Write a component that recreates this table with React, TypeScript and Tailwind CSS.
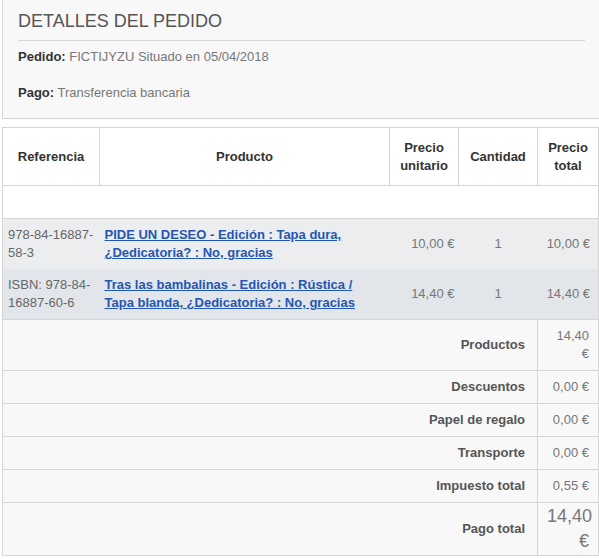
export default function App() {
  const rows = [
    {
      ref: "978-84-16887-58-3",
      name: "PIDE UN DESEO - Edición : Tapa dura, ¿Dedicatoria? : No, gracias",
      unit: "10,00 €",
      qty: "1",
      total: "10,00 €",
      bg: "bg-[#ebedef]",
    },
    {
      ref: "ISBN: 978-84-16887-60-6",
      name: "Tras las bambalinas - Edición : Rústica / Tapa blanda, ¿Dedicatoria? : No, gracias",
      unit: "14,40 €",
      qty: "1",
      total: "14,40 €",
      bg: "bg-[#e2e6ea]",
    },
  ];

  const totals = [
    { label: "Productos", value: "14,40 €", h: "h-[51px]" },
    { label: "Descuentos", value: "0,00 €", h: "h-[33px]" },
    { label: "Papel de regalo", value: "0,00 €", h: "h-[33px]" },
    { label: "Transporte", value: "0,00 €", h: "h-[33px]" },
    { label: "Impuesto total", value: "0,55 €", h: "h-[33px]" },
  ];

  return (
    <div className="w-[599px] h-[559px] overflow-hidden bg-white font-['Liberation_Sans',Arial,sans-serif] text-[13px] leading-[18px] text-[#333]">
      {/* order details box */}
      <div className="ml-[2px] h-[119px] border-l border-b border-[#d6d4d4] bg-[#f8f8f8] pl-[15px] pr-[14px]">
        <h1 className="pt-[11px] pb-[8px] border-b border-[#d6d4d4] text-[18px] leading-[21px] font-normal text-[#555] uppercase">
          Detalles del pedido
        </h1>
        <p className="pt-[7px]">
          <span className="font-bold text-[#333]">Pedido:</span>{" "}
          <span className="text-[#777]">FICTIJYZU Situado en 05/04/2018</span>
        </p>
        <p className="pt-[18px]">
          <span className="font-bold text-[#333]">Pago:</span>{" "}
          <span className="text-[#777]">Transferencia bancaria</span>
        </p>
      </div>

      {/* products table */}
      <table className="mt-[8px] ml-[2px] w-[596px] table-fixed border-collapse border border-[#d6d4d4]">
        <colgroup>
          <col className="w-[97px]" />
          <col className="w-[290px]" />
          <col className="w-[69px]" />
          <col className="w-[79px]" />
          <col className="w-[61px]" />
        </colgroup>
        <thead>
          <tr className="h-[58px] bg-white border-b border-[#d6d4d4]">
            <th className="border-r border-[#d6d4d4] font-bold text-center">Referencia</th>
            <th className="border-r border-[#d6d4d4] font-bold text-center">Producto</th>
            <th className="border-r border-[#d6d4d4] font-bold text-center">
              Precio
              <br />
              unitario
            </th>
            <th className="border-r border-[#d6d4d4] font-bold text-center">Cantidad</th>
            <th className="font-bold text-center">
              Precio
              <br />
              total
            </th>
          </tr>
        </thead>
        <tbody>
          <tr className="h-[33px] bg-white border-b border-[#d6d4d4]">
            <td colSpan={5}></td>
          </tr>
          {rows.map((r) => (
            <tr key={r.ref} className={`h-[50px] ${r.bg}`}>
              <td className="px-[5px] py-[7px] align-top text-[#666] break-words">{r.ref}</td>
              <td className="px-[5px] py-[7px] align-top">
                <a href="#" className="font-bold text-[#2456b4] underline">
                  {r.name}
                </a>
              </td>
              <td className="pr-[4px] text-right text-[#777]">{r.unit}</td>
              <td className="text-center text-[#777]">{r.qty}</td>
              <td className="pr-[8px] text-right text-[#777]">{r.total}</td>
            </tr>
          ))}
        </tbody>
        <tfoot>
          {totals.map((t) => (
            <tr key={t.label} className={`${t.h} bg-[#f8f8f8] border-t border-[#d6d4d4]`}>
              <td colSpan={4} className="pr-[12px] text-right font-bold text-[#555]">
                {t.label}
              </td>
              <td className="border-l border-[#d6d4d4] pr-[9px] pl-[9px] text-right text-[#777]">
                {t.value}
              </td>
            </tr>
          ))}
          <tr className="h-[53px] bg-[#f8f8f8] border-t border-[#d6d4d4]">
            <td colSpan={4} className="pr-[12px] text-right font-bold text-[#555]">
              Pago total
            </td>
            <td className="border-l border-[#d6d4d4] pr-[9px] pl-[9px] text-right text-[18px] leading-[25px] text-[#777]">
              14,40 €
            </td>
          </tr>
        </tfoot>
      </table>
    </div>
  );
}
